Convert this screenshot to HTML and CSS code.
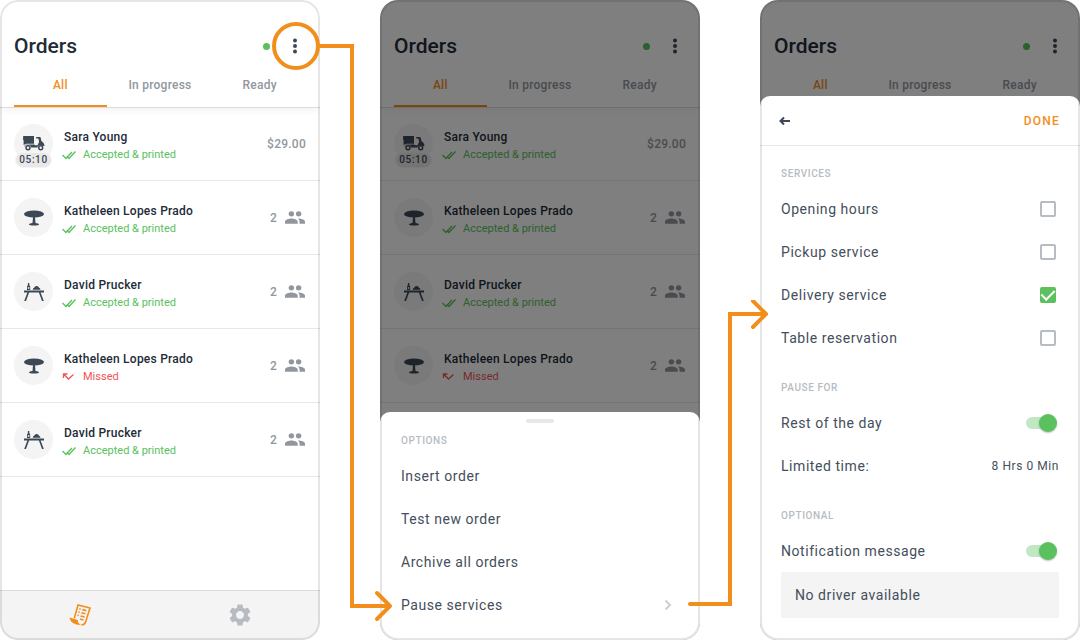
FILE: index.html
```
<!DOCTYPE html>
<html lang="en">
<head>
  <meta charset="UTF-8">
  <meta name="viewport" content="width=device-width, initial-scale=1">
  <title>Orders - Pause services</title>
  <link rel="stylesheet" href="styles.css">
</head>
<body>
  <!-- icons -->
  <svg class="sprite" aria-hidden="true">
    <symbol id="dots" viewBox="0 0 4 16">
      <circle cx="2" cy="2.5" r="2"/><circle cx="2" cy="8" r="2"/><circle cx="2" cy="13.5" r="2"/>
    </symbol>
    <symbol id="scooter" viewBox="0 0 24 16">
      <path d="M1.200 1h10.800v7.800H4.200L1.600 10V5.200L1 4.600z"/>
      <path d="M14.200 2h3.600c.5 0 .8.3.9.7l.7 3.200c1.800 1 3 2.900 3.100 5.100h-1.700a3.400 3.400 0 0 0-5.500 1.600H9.200A3.400 3.400 0 0 0 2.600 12c-.3-1.600.8-2.600 2.200-2.600h7.400l1 .9h2.300l1.600-3.300-.7-3.400h-2.200z"/>
      <path fill-rule="evenodd" d="M6 10a2.700 2.700 0 1 0 0 5.400A2.700 2.700 0 0 0 6 10zm0 1.500a1.200 1.200 0 1 1 0 2.400 1.200 1.200 0 0 1 0-2.400zM18.700 10a2.700 2.700 0 1 0 0 5.400 2.700 2.700 0 0 0 0-5.400zm0 1.500a1.200 1.200 0 1 1 0 2.400 1.200 1.200 0 0 1 0-2.400z"/>
    </symbol>
    <symbol id="table" viewBox="0 0 20 16">
      <ellipse cx="10" cy="4" rx="10" ry="3.600"/>
      <path d="M9 7h2l.5 6c2 .2 3.500.8 3.500 1.500 0 .6-2 1-5 1s-5-.4-5-1c0-.7 1.500-1.300 3.500-1.500z"/>
    </symbol>
    <symbol id="bench" viewBox="0 0 20 20">
      <path d="M0 8.500h20v2H0zM3.600 10h1.700L2 19H.2zM14.700 10h1.700l3.400 9H18z"/>
      <path d="M3.900 1h1.400v2.300c.7.500.9 1 .9 1.700v3H3V5c0-.7.2-1.200.9-1.700zM8.800 7.800c0-1.300.7-1.800 1.400-2 .3-1.100 1.100-1.900 2.400-1.900s2.100.8 2.400 1.900c.7.200 1.400.7 1.400 2z"/>
      <path class="cut" d="M3.800 5.200h1.600v1.600H3.800z"/>
    </symbol>
    <symbol id="people" viewBox="0 0 22 14">
      <circle cx="7" cy="3" r="3"/><circle cx="15" cy="3" r="3"/>
      <path d="M7 8c-2.300 0-7 1.200-7 3.500V14h14v-2.500C14 9.200 9.300 8 7 8zM15 8h-1c1.200.8 2 2 2 3.500V14h6v-2.500C22 9.200 17.300 8 15 8z"/>
    </symbol>
    <symbol id="checks" viewBox="0 0 14 10">
      <path d="M.5 5L4 8.500l6-6.500M4.800 6.300L7 8.500 13.500 1.500"/>
    </symbol>
    <symbol id="missed" viewBox="0 0 14 10">
      <path d="M1.500 6V2h4M1.500 2l5 5L11.500 2.500"/>
    </symbol>
  </svg>

  <main class="steps">
    <section class="step">
      <div class="phone">
        <div class="screen">
          <header class="top">
            <div class="title">
              <h1>Orders</h1>
              <span class="online"></span>
              <button class="more" aria-label="More options"><svg><use href="#dots"/></svg></button>
            </div>
            <nav class="tabs">
              <a class="active" href="#all">All</a>
              <a href="#progress">In progress</a>
              <a href="#ready">Ready</a>
            </nav>
          </header>
          <ul class="orders">
            <li>
              <div class="avatar"><svg class="scooter"><use href="#scooter"/></svg><span class="time">05:10</span></div>
              <div class="info"><h2>Sara Young</h2><p class="ok"><svg><use href="#checks"/></svg>Accepted &amp; printed</p></div>
              <span class="amount">$29.00</span>
            </li>
            <li>
              <div class="avatar"><svg class="table"><use href="#table"/></svg></div>
              <div class="info"><h2>Katheleen Lopes Prado</h2><p class="ok"><svg><use href="#checks"/></svg>Accepted &amp; printed</p></div>
              <span class="amount">2 <svg><use href="#people"/></svg></span>
            </li>
            <li>
              <div class="avatar"><svg class="bench"><use href="#bench"/></svg></div>
              <div class="info"><h2>David Prucker</h2><p class="ok"><svg><use href="#checks"/></svg>Accepted &amp; printed</p></div>
              <span class="amount">2 <svg><use href="#people"/></svg></span>
            </li>
            <li>
              <div class="avatar"><svg class="table"><use href="#table"/></svg></div>
              <div class="info"><h2>Katheleen Lopes Prado</h2><p class="missed"><svg><use href="#missed"/></svg>Missed</p></div>
              <span class="amount">2 <svg><use href="#people"/></svg></span>
            </li>
            <li>
              <div class="avatar"><svg class="bench"><use href="#bench"/></svg></div>
              <div class="info"><h2>David Prucker</h2><p class="ok"><svg><use href="#checks"/></svg>Accepted &amp; printed</p></div>
              <span class="amount">2 <svg><use href="#people"/></svg></span>
            </li>
          </ul>
          <nav class="bottom">
            <a href="#orders" aria-label="Orders">
              <svg class="receipt" viewBox="0 0 22 22">
                <path d="M5.300 14.200L9 1l12 3.100-4.300 13.600c-.6 2-2 3.300-4.300 3"/>
                <path class="fill" d="M.6 13.500l8.300 2.600c-.3 2.200.8 4 3.300 4.900C5 20.800.8 18 .6 13.500z"/>
                <path class="rows" d="M10.300 4.800l1.300.3M13.300 5.600l4 1M9.400 8l1.300.3M12.400 8.800l4 1M8.500 11.200l1.300.3M11.500 12l4 1M11 15l3.500.9"/>
              </svg>
            </a>
            <a href="#settings" aria-label="Settings">
              <svg class="gear" viewBox="2 2 20 20"><path d="M19.140 12.940c.04-.3.06-.61.06-.94 0-.32-.02-.64-.07-.94l2.030-1.580c.18-.14.23-.41.12-.61l-1.920-3.320c-.12-.22-.37-.29-.59-.22l-2.390.96c-.5-.38-1.030-.7-1.620-.94l-.36-2.540c-.04-.24-.24-.41-.48-.41h-3.840c-.24 0-.43.17-.47.41l-.36 2.540c-.59.24-1.130.57-1.620.94l-2.390-.96c-.22-.08-.47 0-.59.22L2.740 8.870c-.12.21-.08.47.12.61l2.030 1.580c-.05.3-.09.63-.09.94s.02.64.07.94l-2.030 1.580c-.18.14-.23.41-.12.61l1.920 3.320c.12.22.37.29.59.22l2.390-.96c.5.38 1.030.7 1.620.94l.36 2.540c.05.24.24.41.48.41h3.840c.24 0 .44-.17.47-.41l.36-2.540c.59-.24 1.130-.56 1.620-.94l2.390.96c.22.08.47 0 .59-.22l1.920-3.320c.12-.22.07-.47-.12-.61l-2.010-1.580zM12 15.600c-1.980 0-3.600-1.620-3.600-3.600s1.620-3.600 3.600-3.600 3.600 1.620 3.600 3.600-1.620 3.600-3.600 3.600z"/></svg>
            </a>
          </nav>
        </div>
      </div>
      <svg class="arrow arrow-options" viewBox="0 0 122 604" aria-hidden="true">
        <circle cx="24" cy="26" r="22"/>
        <path d="M46 26h34v560h38"/>
        <path class="head" d="M105 573l13 13-13 13"/>
      </svg>
    </section>

    <section class="step">
      <div class="phone">
        <div class="screen">
          <header class="top">
            <div class="title">
              <h1>Orders</h1>
              <span class="online"></span>
              <button class="more" aria-label="More options"><svg><use href="#dots"/></svg></button>
            </div>
            <nav class="tabs">
              <a class="active" href="#all">All</a>
              <a href="#progress">In progress</a>
              <a href="#ready">Ready</a>
            </nav>
          </header>
          <ul class="orders">
            <li>
              <div class="avatar"><svg class="scooter"><use href="#scooter"/></svg><span class="time">05:10</span></div>
              <div class="info"><h2>Sara Young</h2><p class="ok"><svg><use href="#checks"/></svg>Accepted &amp; printed</p></div>
              <span class="amount">$29.00</span>
            </li>
            <li>
              <div class="avatar"><svg class="table"><use href="#table"/></svg></div>
              <div class="info"><h2>Katheleen Lopes Prado</h2><p class="ok"><svg><use href="#checks"/></svg>Accepted &amp; printed</p></div>
              <span class="amount">2 <svg><use href="#people"/></svg></span>
            </li>
            <li>
              <div class="avatar"><svg class="bench"><use href="#bench"/></svg></div>
              <div class="info"><h2>David Prucker</h2><p class="ok"><svg><use href="#checks"/></svg>Accepted &amp; printed</p></div>
              <span class="amount">2 <svg><use href="#people"/></svg></span>
            </li>
            <li>
              <div class="avatar"><svg class="table"><use href="#table"/></svg></div>
              <div class="info"><h2>Katheleen Lopes Prado</h2><p class="missed"><svg><use href="#missed"/></svg>Missed</p></div>
              <span class="amount">2 <svg><use href="#people"/></svg></span>
            </li>
          </ul>
        </div>
        <div class="scrim"></div>
        <div class="sheet options">
          <span class="handle"></span>
          <h3>Options</h3>
          <button class="row">Insert order</button>
          <button class="row">Test new order</button>
          <button class="row">Archive all orders</button>
          <button class="row">Pause services
            <svg class="chevron" viewBox="0 0 8 12"><path d="M1.500 1.500L6 6l-4.500 4.500"/></svg>
          </button>
        </div>
      </div>
      <svg class="arrow arrow-services" viewBox="0 0 82 310" aria-hidden="true">
        <path class="head" d="M2 304h38"/>
        <path d="M38 304h4V14h36"/>
        <path class="head" d="M65 1l13 13-13 13"/>
      </svg>
    </section>

    <section class="step">
      <div class="phone">
        <div class="screen">
          <header class="top">
            <div class="title">
              <h1>Orders</h1>
              <span class="online"></span>
              <button class="more" aria-label="More options"><svg><use href="#dots"/></svg></button>
            </div>
            <nav class="tabs">
              <a class="active" href="#all">All</a>
              <a href="#progress">In progress</a>
              <a href="#ready">Ready</a>
            </nav>
          </header>
        </div>
        <div class="scrim"></div>
        <form class="sheet services">
          <div class="sheet-top">
            <button type="button" class="back" aria-label="Back">
              <svg viewBox="0 0 12 10"><path d="M11 5H1.500M5 1.500L1.500 5 5 8.500"/></svg>
            </button>
            <button type="button" class="done">Done</button>
          </div>
          <h3>Services</h3>
          <label class="row">Opening hours <input type="checkbox" class="check"></label>
          <label class="row">Pickup service <input type="checkbox" class="check"></label>
          <label class="row">Delivery service <input type="checkbox" class="check" checked></label>
          <label class="row">Table reservation <input type="checkbox" class="check"></label>
          <h3>Pause for</h3>
          <label class="row">Rest of the day <input type="checkbox" role="switch" class="switch" checked></label>
          <div class="row">Limited time: <button type="button" class="limit">8 Hrs 0 Min</button></div>
          <h3>Optional</h3>
          <label class="row">Notification message <input type="checkbox" role="switch" class="switch" checked></label>
          <input type="text" class="message" aria-label="Message" value="No driver available">
        </form>
      </div>
    </section>
  </main>
</body>
</html>
```
FILE: styles.css
```
* { box-sizing: border-box; margin: 0; padding: 0; }
body { font-family: Roboto, "Liberation Sans", sans-serif; background: white; color: #222b38; }
button, input { font: inherit; letter-spacing: inherit; color: inherit; background: none; border: none; }
button { cursor: pointer; }
a { text-decoration: none; color: inherit; }
.sprite { position: absolute; width: 0; height: 0; }

/* three phones side by side */
.steps { display: grid; grid-template-columns: repeat(3, 1fr); gap: 60px; min-height: 100vh; }
.step { position: relative; display: grid; }
.phone { position: relative; display: grid; border-radius: 18px; overflow: hidden; background: white; }
.phone::after { content: ""; position: absolute; inset: 0; border: 2px solid rgba(0, 0, 0, 0.1); border-radius: 18px; pointer-events: none; }
.screen, .scrim, .sheet { grid-area: 1 / 1; min-width: 0; }
.screen { display: flex; flex-direction: column; }
.scrim { background: rgba(0, 0, 0, 0.5); z-index: 0; }

/* header */
.top { padding: 32px 14px 0; border-bottom: 1px solid #dcdcdc; box-shadow: 0 2px 8px rgba(0, 0, 0, 0.06); }
.title { display: flex; align-items: center; height: 28px; }
.title h1 { flex: 1; font-size: 21px; font-weight: 500; }
.online { width: 7px; height: 7px; border-radius: 50%; background: #5ac15e; }
.more { display: flex; justify-content: center; width: 20px; margin: 0 1px 0 15px; }
.more svg { width: 4px; height: 16px; fill: #3d4857; }
.tabs { display: grid; grid-template-columns: repeat(3, 1fr); gap: 7px; margin-top: 4px; font-size: 12px; font-weight: 500; letter-spacing: 0.02em; color: #92979e; text-align: center; }
.tabs a { height: 43px; line-height: 43px; }
.tabs .active { color: #f18e1c; border-bottom: 2px solid #f18e1c; }

/* orders */
.orders { flex: 1; margin-top: -1px; list-style: none; }
.orders li { display: flex; align-items: center; height: 74px; padding: 0 14px; border-bottom: 1px solid #e8e8e8; }
.avatar { position: relative; display: flex; align-items: center; justify-content: center; width: 39px; height: 39px; border-radius: 50%; background: #f4f4f4; fill: #3d4857; }
.scooter { width: 24px; height: 16px; margin-bottom: 2px; }
.table { width: 20px; height: 16px; }
.bench { width: 20px; height: 20px; }
.cut { fill: #f4f4f4; }
.time { position: absolute; top: 28px; left: 1px; width: 37px; border: 1px solid #f4f4f4; border-radius: 8px; background: #e8e8e8; color: #3d4857; font-size: 10px; font-weight: 500; line-height: 14px; letter-spacing: 0.06em; text-align: center; }
.info { flex: 1; margin-left: 11px; padding-top: 4px; }
.info h2 { font-size: 12px; font-weight: 500; line-height: 18px; letter-spacing: 0.02em; }
.info p { display: flex; align-items: center; gap: 7px; margin-left: -2px; font-size: 11px; line-height: 17px; }
.info svg { width: 14px; height: 10px; fill: none; stroke: currentColor; stroke-width: 1.3; }
.ok { color: #5ac15e; }
.missed { color: #f05454; }
.amount { display: flex; align-items: center; gap: 8px; font-size: 12px; font-weight: 500; letter-spacing: 0.02em; color: #92979e; }
.amount svg { width: 20px; height: 13px; margin-right: 1px; fill: #92979e; }

.bottom { display: grid; grid-template-columns: 1fr 1fr; height: 50px; padding-bottom: 1px; border-top: 1px solid #dcdcdc; background: #f4f4f4; }
.bottom a { display: flex; align-items: center; justify-content: center; }
.receipt { width: 22px; height: 22px; fill: none; stroke: #f18e1c; stroke-width: 1.6; }
.receipt .fill { fill: #f18e1c; stroke: none; }
.gear { width: 22px; height: 22px; fill: #b7bcc2; }

/* bottom sheets */
.sheet { z-index: 0; display: flex; flex-direction: column; padding: 0 21px; border-radius: 10px 10px 0 0; background: white; color: #444e5c; font-size: 14px; letter-spacing: 0.04em; }
.sheet h3 { margin: 22px 0 6px; font-size: 10px; font-weight: 500; line-height: 14px; letter-spacing: 0.06em; text-transform: uppercase; color: #b7bcc2; }
.row { display: flex; align-items: center; justify-content: space-between; height: 43px; text-align: left; }
.options { align-self: end; padding-bottom: 14px; }
.options h3 { margin-top: 11px; }
.handle { align-self: center; width: 28px; height: 4px; margin-top: 7px; border-radius: 2px; background: #e8e8e8; }
.chevron { width: 8px; height: 12px; margin-right: 7px; fill: none; stroke: #cfcfcf; stroke-width: 2; }

.services { margin-top: 96px; padding-bottom: 22px; }
.sheet-top { display: flex; align-items: center; justify-content: space-between; height: 50px; margin: 0 -21px -1px; padding: 0 20px 0 19px; border-bottom: 1px solid #e8e8e8; }
.back svg { display: block; width: 12px; height: 10px; fill: none; stroke: #3d4857; stroke-width: 2; }
.done { color: #f18e1c; font-size: 12px; font-weight: 500; letter-spacing: 0.1em; text-transform: uppercase; }
.check { appearance: none; display: flex; justify-content: center; width: 16px; height: 16px; margin-right: 3px; border: 2px solid #b7bcc2; border-radius: 2px; }
.check:checked { background: #5ac15e; border-color: #5ac15e; }
.check:checked::after { content: ""; width: 6px; height: 11px; margin-top: -2px; border: solid white; border-width: 0 2px 2px 0; transform: rotate(45deg); }
.switch { appearance: none; display: flex; align-items: center; width: 31px; height: 18px; margin-right: 2px; }
.switch::before { content: ""; width: 28px; height: 12px; border-radius: 6px; background: #c0e8c2; }
.switch::after { content: ""; width: 18px; height: 18px; margin-left: -15px; border-radius: 50%; background: #5ac15e; box-shadow: 0 1px 2px rgba(0, 0, 0, 0.25); }
.limit { font-size: 12px; }
.message { width: 100%; height: 46px; padding: 0 14px; border-radius: 2px; background: #f4f4f4; }

/* orange arrows between the steps */
.arrow { position: absolute; z-index: 1; fill: none; stroke: #f18e1c; stroke-width: 4; pointer-events: none; }
.arrow .head { stroke-linecap: round; stroke-linejoin: round; }
.arrow-options { top: 20px; right: -74px; width: 122px; height: 604px; }
.arrow-services { top: 300px; right: -70px; width: 82px; height: 310px; }
```
